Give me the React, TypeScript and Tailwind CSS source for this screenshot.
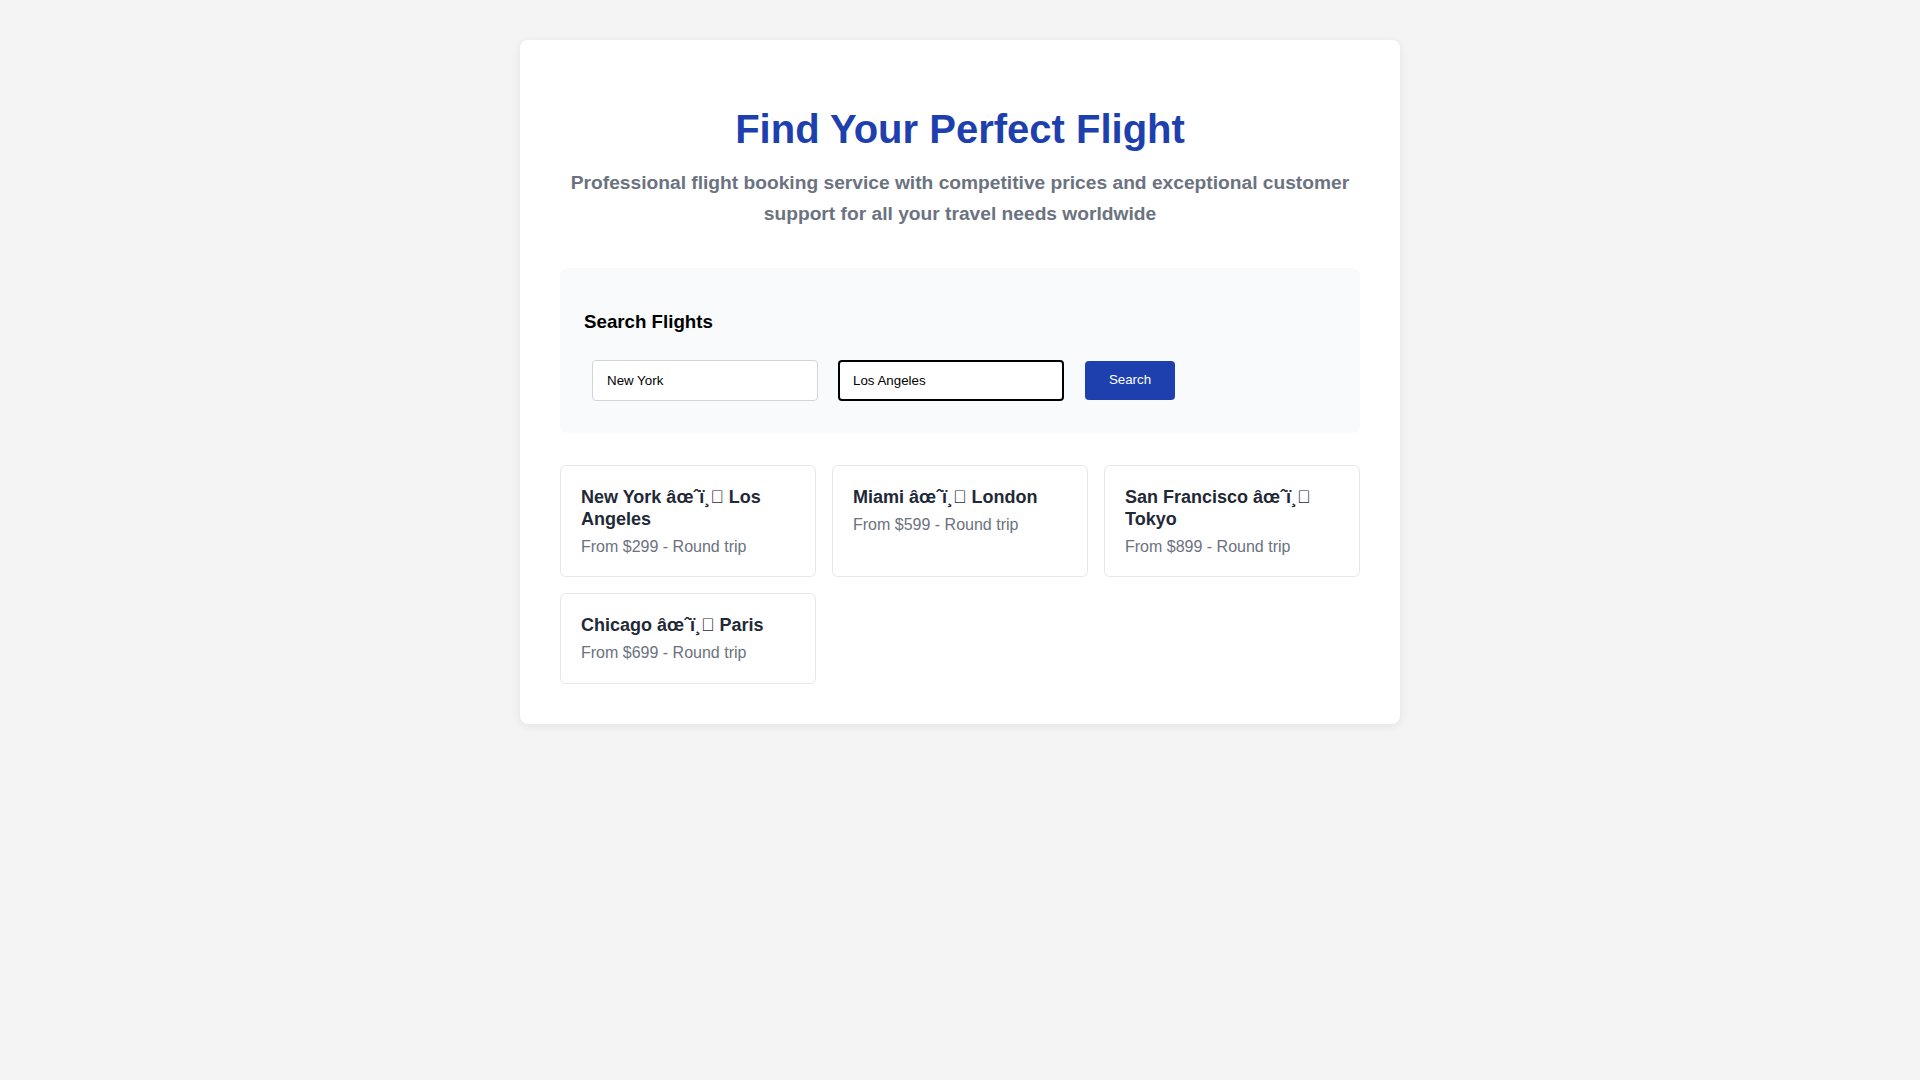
const routes = [
  { title: "New York âœˆï¸\uE000 Los Angeles", price: "From $299 - Round trip" },
  { title: "Miami âœˆï¸\uE000 London", price: "From $599 - Round trip" },
  { title: "San Francisco âœˆï¸\uE000 Tokyo", price: "From $899 - Round trip" },
  { title: "Chicago âœˆï¸\uE000 Paris", price: "From $699 - Round trip" },
];

function App() {
  return (
    <div className="min-h-screen w-full bg-[#f4f4f4] pt-10 font-['Liberation_Sans',Arial,sans-serif]">
      <div className="mx-auto w-[880px] rounded-lg bg-white p-10 shadow-[0_2px_10px_rgba(0,0,0,0.08)]">
        {/* Header */}
        <div className="text-center">
          <h1 className="mt-[25px] text-[40px] font-bold leading-[48px] text-[#1e40af]">
            Find Your Perfect Flight
          </h1>
          <p className="mt-[14px] text-[19.2px] font-bold leading-[31px] text-[#6b7280]">
            Professional flight booking service with competitive prices and
            exceptional customer support for all your travel needs worldwide
          </p>
        </div>

        {/* Search */}
        <div className="mt-[39px] rounded-lg bg-[#f9fafb] p-6">
          <h3 className="my-[18.72px] text-[18.72px] font-bold leading-[21.5px] text-black">
            Search Flights
          </h3>
          <div className="flex items-center pl-2 pt-[9px]">
            <input
              type="text"
              defaultValue="New York"
              className="h-[41px] w-[226px] rounded border border-[#d1d5db] bg-white px-[14px] text-[13.33px] text-black outline-none"
            />
            <input
              type="text"
              defaultValue="Los Angeles"
              className="ml-5 h-[41px] w-[226px] rounded border-2 border-black bg-white px-[13px] text-[13.33px] text-black outline-none"
            />
            <button className="ml-[21px] h-[39px] w-[90px] rounded bg-[#1e40af] text-[13.33px] text-white">
              Search
            </button>
          </div>
          <div className="h-2" />
        </div>

        {/* Routes */}
        <div className="mt-8 grid grid-cols-3 gap-4">
          {routes.map((r) => (
            <div
              key={r.title}
              className="rounded-md border border-[#e5e7eb] bg-white p-5"
            >
              <h3 className="text-[18px] font-bold leading-[22px] text-[#1f2937]">
                {r.title}
              </h3>
              <p className="mt-2 text-base leading-[18.4px] text-[#6b7280]">
                {r.price}
              </p>
            </div>
          ))}
        </div>
      </div>
    </div>
  );
}

export default App;
